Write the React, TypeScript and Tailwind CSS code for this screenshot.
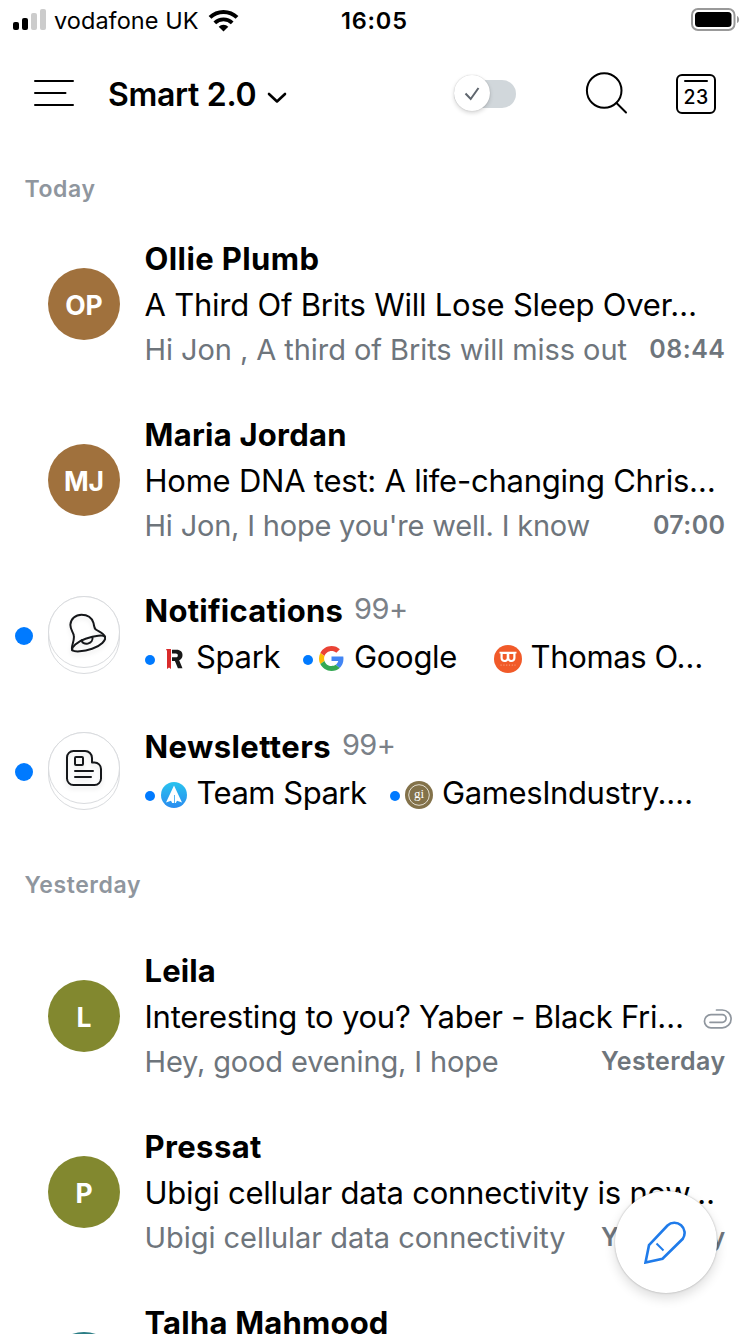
import type { ReactNode } from "react";

type Mail = {
  initials: string;
  color: string;
  name: string;
  nameClass: string;
  subject: string;
  subjectClass: string;
  preview: string;
  previewClass: string;
  time: string;
  timeClass: string;
  attachment?: boolean;
};

const today: Mail[] = [
  {
    initials: "OP",
    color: "bg-[#a0713d]",
    name: "Ollie Plumb",
    nameClass: "tracking-[0.4px]",
    subject: "A Third Of Brits Will Lose Sleep Over…",
    subjectClass: "tracking-[-0.23px]",
    preview: "Hi Jon , A third of Brits will miss out",
    previewClass: "tracking-[-0.07px]",
    time: "08:44",
    timeClass: "tracking-[0.5px]",
  },
  {
    initials: "MJ",
    color: "bg-[#a0713d]",
    name: "Maria Jordan",
    nameClass: "tracking-[0.25px]",
    subject: "Home DNA test: A life-changing Chris…",
    subjectClass: "tracking-[-0.23px]",
    preview: "Hi Jon, I hope you're well. I know",
    previewClass: "tracking-[-0.2px]",
    time: "07:00",
    timeClass: "tracking-[0.4px]",
  },
];

const yesterday: Mail[] = [
  {
    initials: "L",
    color: "bg-[#82882f]",
    name: "Leila",
    nameClass: "tracking-[0.1px]",
    subject: "Interesting to you? Yaber - Black Fri…",
    subjectClass: "tracking-[-0.24px]",
    preview: "Hey, good evening, I hope",
    previewClass: "tracking-[-0.14px]",
    time: "Yesterday",
    timeClass: "tracking-[0.4px]",
    attachment: true,
  },
  {
    initials: "P",
    color: "bg-[#82882f]",
    name: "Pressat",
    nameClass: "tracking-[0.4px]",
    subject: "Ubigi cellular data connectivity is now…",
    subjectClass: "tracking-[-0.22px]",
    preview: "Ubigi cellular data connectivity",
    previewClass: "tracking-[-0.04px]",
    time: "Yesterday",
    timeClass: "tracking-[0.4px]",
  },
  {
    initials: "TM",
    color: "bg-[#2b7d85]",
    name: "Talha Mahmood",
    nameClass: "tracking-[0.2px]",
    subject: "",
    subjectClass: "",
    preview: "",
    previewClass: "",
    time: "",
    timeClass: "",
  },
];

function StatusBar() {
  return (
    <div className="flex h-10 shrink-0 items-center">
      <svg className="ml-[13px] h-[22px] w-[33px] shrink-0" viewBox="0 0 33 22">
        <rect x="0" y="13" width="6" height="8" rx="2" fill="#000" />
        <rect x="9" y="9" width="6" height="12" rx="2" fill="#000" />
        <rect x="18" y="4" width="6" height="17" rx="2" fill="#ccc" />
        <rect x="27" y="0" width="6" height="21" rx="2" fill="#ccc" />
      </svg>
      <span className="mt-[2px] ml-[8px] w-[146px] text-[23.5px] tracking-[0.05px] whitespace-nowrap">vodafone UK</span>
      <svg className="ml-[8px] h-[23px] w-[31px] shrink-0" viewBox="0 0 31 23" fill="none" stroke="#000">
        <path d="M2 8.4a19.3 19.3 0 0 1 27 0" strokeWidth="4" />
        <path d="M6.8 13.9a12.4 12.4 0 0 1 17.4 0" strokeWidth="3.8" />
        <path d="M15.500 22.500l-4.800-4.800a6.800 6.800 0 0 1 9.600 0z" fill="#000" stroke="none" />
      </svg>
      <span className="mt-[2px] ml-[102px] w-[70px] text-[23.5px] font-semibold tracking-[0.8px] whitespace-nowrap">16:05</span>
      <svg className="ml-auto mr-[10px] h-[24px] w-[49px] shrink-0" viewBox="0 0 49 24">
        <rect x="1" y="1" width="42.500" height="21" rx="6" fill="none" stroke="#999" strokeWidth="2" />
        <rect x="4" y="4" width="36.500" height="15" rx="3.500" fill="#000" />
        <path d="M46 8c2.800 1 2.800 6 0 7z" fill="#999" />
      </svg>
    </div>
  );
}

function Header() {
  return (
    <header className="flex h-[108px] shrink-0 items-center">
      <svg className="-mt-[2px] ml-[34px] h-[28px] w-[40px]" viewBox="0 0 40 28" stroke="#000" strokeWidth="2" strokeLinecap="round">
        <path d="M1 2h38M1 14h30.500M1 26h38" />
      </svg>
      <h1 className="mt-px ml-[34px] w-[149px] text-[32px] leading-none font-semibold tracking-[-0.3px] whitespace-nowrap">Smart 2.0</h1>
      <svg className="mt-[7px] ml-[10px] h-[12px] w-[20px]" viewBox="0 0 20 12" fill="none" stroke="#000" strokeWidth="2.600" strokeLinecap="round" strokeLinejoin="round">
        <path d="M2 2l8 7.500L18 2" />
      </svg>
      <div className="ml-[167px] flex h-[28px] w-[62px] items-center rounded-full bg-[#d1d7db]">
        <div className="-mt-[3px] flex size-9 items-center justify-center rounded-full bg-white shadow-[0_2px_4px_rgba(0,0,0,0.16),0_0_1px_rgba(0,0,0,0.25)]">
          <svg className="mt-[3px] h-[14px] w-[16px]" viewBox="0 0 16 14" fill="none" stroke="#5f666e" strokeWidth="2">
            <path d="M1.500 6.500l5.200 5.500L14.500 1" />
          </svg>
        </div>
      </div>
      <svg className="-mt-[3px] ml-[69px] h-[44px] w-[44px]" viewBox="0 0 44 44" fill="none" stroke="#000" strokeWidth="2" strokeLinecap="round">
        <circle cx="19.200" cy="19.500" r="17.300" />
        <path d="M31.500 32L41 41.500" />
      </svg>
      <div className="ml-[47px] flex h-[40px] w-[40px] flex-col items-center rounded-[6px] border-2 border-black">
        <div className="mt-[4px] h-[2px] w-[24px] shrink-0 rounded-full bg-black" />
        <span className="mt-[5px] text-[19.5px] leading-[20px] font-medium tracking-[0.3px]">23</span>
      </div>
    </header>
  );
}

function SectionTitle({ children }: { children: string }) {
  return (
    <h2 className="pl-[24.5px] text-[23px] leading-[28px] font-semibold tracking-[0.6px] text-[#8f969e]">{children}</h2>
  );
}

function Paperclip() {
  return (
    <svg className="h-[20px] w-[29px]" viewBox="0 0 29 20" fill="none" stroke="#8f969e" strokeWidth="1.700" strokeLinecap="round">
      <path d="M7 13.300h12.300a3.800 3.800 0 0 0 0-7.600H8a6.550 6.550 0 0 0 0 13.100h11.200a8.900 8.900 0 0 0 0-17.800H13.500" />
    </svg>
  );
}

function MailRow({ mail }: { mail: Mail }) {
  return (
    <li className="flex h-[176px] shrink-0">
      <div
        className={`mt-[52px] ml-[48px] flex size-[72px] shrink-0 items-center justify-center rounded-full pt-[3px] text-[26.5px] font-bold text-white ${mail.color}`}
      >
        {mail.initials}
      </div>
      <div className="ml-[24.5px] flex-1 pt-[20px] pr-[24.5px] whitespace-nowrap">
        <div className={`text-[31px] leading-[46px] font-bold ${mail.nameClass}`}>{mail.name}</div>
        <div className="flex h-[46px] items-center justify-between">
          <span className={`text-[31px] leading-[46px] ${mail.subjectClass}`}>{mail.subject}</span>
          {mail.attachment && (
            <span className="-mr-[6.5px] pt-[4px]">
              <Paperclip />
            </span>
          )}
        </div>
        <div className="flex h-[44px] items-center justify-between text-[#6e757c]">
          <span className={`text-[29px] ${mail.previewClass}`}>{mail.preview}</span>
          <span className={`text-[25px] font-semibold ${mail.timeClass}`}>{mail.time}</span>
        </div>
      </div>
    </li>
  );
}

function GroupRow({ icon, title, titleClass, children }: { icon: ReactNode; title: string; titleClass: string; children: ReactNode }) {
  return (
    <li className="flex h-[136px] shrink-0">
      <div className="mt-[59px] ml-[15px] size-[18px] rounded-full bg-[#007aff]" />
      <div className="mt-[28px] ml-[15px] h-[78px] w-[72px] rounded-[36px] border border-[#d9dbde]">
        <div className="-mt-px -ml-px flex size-[72px] items-center justify-center rounded-full border border-[#d9dbde] bg-white">
          {icon}
        </div>
      </div>
      <div className="ml-[24.5px] pt-[20px] whitespace-nowrap">
        <div className="flex h-[46px] items-center">
          <span className={`text-[31px] font-bold ${titleClass}`}>{title}</span>
          <span className="-mt-[4px] ml-[11px] text-[29px] tracking-[-0.6px] text-[#7b8188]">99+</span>
        </div>
        <div className="flex h-[46px] items-center pl-[0.5px] text-[31px]">{children}</div>
      </div>
    </li>
  );
}

const Dot = () => <span className="mt-[5px] size-[10px] shrink-0 rounded-full bg-[#007aff]" />;

const BellIcon = () => (
  <svg className="h-[44px] w-[44px] drop-shadow-[0_3px_2px_rgba(0,0,0,0.08)]" viewBox="0 0 44 44" fill="none" stroke="#15171a" strokeWidth="2" strokeLinejoin="round" strokeLinecap="round">
    <path d="M10.300 40.300c-1.900-3.800 2.500-8.500 1.500-14.800-.4-3-3.700-6-3.400-11C8.800 9 13.500 4.800 19.500 4.800c6 0 10.400 3.400 11.900 8 .9 3 .5 5.300 2.400 6.700 3.200 2.300 8 3.200 9.300 7.500" />
    <path d="M10.300 40.300c-1-3.300 4.500-8.600 13.300-11.600s18.500-4.400 19.500-1.500-4 8.600-13 11.600-17.300 3.300-19.800 1.500z" />
    <path d="M19.800 30.300c.2 2.500 2.800 4.200 6 3.300 3.300-.9 5.300-3.500 4.600-6.600" />
  </svg>
);

const NewsIcon = () => (
  <svg className="h-[38px] w-[38px] drop-shadow-[0_3px_2px_rgba(0,0,0,0.1)]" viewBox="0 0 38 38" fill="none" stroke="#15171a" strokeWidth="2" strokeLinejoin="round" strokeLinecap="round">
    <path d="M8.500 2H20a7 7 0 0 1 7 7v4.500h2.500a6.500 6.500 0 0 1 6.500 6.500v9.500a6.500 6.500 0 0 1-6.500 6.500h-21A6.500 6.500 0 0 1 2 29.500v-21A6.500 6.500 0 0 1 8.500 2z" />
    <rect x="10" y="8" width="8" height="8" rx="1" />
    <path d="M10 22h18M10 28h16" />
  </svg>
);

const ReaddleIcon = () => (
  <svg className="mt-[3px] ml-[11px] h-[20px] w-[17px]" viewBox="0 0 17 20">
    <path d="M0 0h5v20l-2-1.500L1 20V2z" fill="#d92b2b" />
    <path d="M6 .7h4.500c4 0 6 2.300 6 5.500 0 2.400-1.200 4.200-3.300 5l3.300 8h-4.600l-3-7.200H6V8.300h3.800c1.300 0 2-.7 2-1.900s-.7-1.900-2-1.900H6z" fill="#181818" />
  </svg>
);

const GoogleIcon = () => (
  <svg className="mt-[3px] ml-[6px] size-[25px]" viewBox="0 0 48 48">
    <path fill="#EA4335" d="M24 9.500c3.540 0 6.710 1.220 9.210 3.600l6.850-6.850C35.900 2.380 30.470 0 24 0 14.620 0 6.510 5.380 2.560 13.220l7.980 6.190C12.430 13.720 17.740 9.500 24 9.500z" />
    <path fill="#4285F4" d="M46.980 24.550c0-1.570-.15-3.090-.38-4.550H24v9.020h12.940c-.58 2.960-2.260 5.480-4.780 7.180l7.730 6c4.510-4.180 7.090-10.360 7.090-17.650z" />
    <path fill="#FBBC05" d="M10.530 28.590c-.48-1.450-.76-2.990-.76-4.590s.27-3.140.76-4.590l-7.980-6.190C.92 16.460 0 20.120 0 24s.92 7.540 2.560 10.780z" />
    <path fill="#34A853" d="M24 48c6.480 0 11.930-2.130 15.890-5.810l-7.730-6c-2.150 1.450-4.920 2.300-8.160 2.300-6.260 0-11.570-4.220-13.470-9.910l-7.980 6.190C6.510 42.620 14.620 48 24 48z" />
  </svg>
);

const MaskIcon = () => (
  <svg className="mt-[3px] ml-[36px] size-[28px]" viewBox="0 0 28 28">
    <circle cx="14" cy="14" r="14" fill="#f15a29" />
    <path d="M5.500 6.700h17v1.800h-1v4.500c0 4.300-5 5.300-7.500 2.500-2.500 2.800-7.500 1.800-7.500-2.500V8.500h-1z" fill="#fff" />
    <path d="M8.700 9h4v4c0 2.500-4 2.500-4 0zM15.300 9h4v4c0 2.500-4 2.500-4 0z" fill="#f15a29" />
    <path d="M6.500 20.200h15" stroke="#f9966f" strokeWidth="1.200" strokeDasharray="1.200 1.600" />
  </svg>
);

const SparkIcon = () => (
  <svg className="mt-[3px] ml-[6px] size-[26px]" viewBox="0 0 26 26">
    <defs>
      <linearGradient id="spark" x1="0" y1="0" x2="0" y2="1">
        <stop offset="0" stopColor="#29c3ee" />
        <stop offset="1" stopColor="#2a8cf0" />
      </linearGradient>
    </defs>
    <circle cx="13" cy="13" r="13" fill="url(#spark)" />
    <path d="M13 3.500l8 17-5-1.800-1.200 2.300h-3.600L10 18.700l-5 1.800z" fill="#fff" />
    <path d="M13.500 13v8" stroke="#5db8f2" strokeWidth="1" />
  </svg>
);

const GamesIcon = () => (
  <svg className="mt-[3px] ml-[5px] size-[28px]" viewBox="0 0 28 28">
    <circle cx="14" cy="14" r="14" fill="#83724a" />
    <circle cx="14" cy="14" r="10.300" fill="none" stroke="#e4dfd2" strokeWidth="1" />
    <text x="14" y="16.500" textAnchor="middle" fontFamily="Liberation Serif, serif" fontSize="13" fill="#fff">gi</text>
  </svg>
);

function ComposeButton() {
  return (
    <button className="absolute top-[1191px] left-[615px] flex size-[102px] items-center justify-center rounded-full bg-white shadow-[0_5px_12px_rgba(0,0,0,0.14),0_0_2px_rgba(0,0,0,0.3)]">
      <svg className="h-[44px] w-[44px]" viewBox="0 0 44 44" fill="none" stroke="#1f7bea" strokeWidth="2.600" strokeLinejoin="miter">
        <path d="M1.500 42.500L5 25.200L23.500 5.500a10.200 10.200 0 0 1 15.300 13.300L18.500 38.700z" />
        <path d="M12.500 23.500l7 7" strokeWidth="2" />
      </svg>
    </button>
  );
}

export default function App() {
  return (
    <div className="relative flex h-[1334px] w-[750px] flex-col overflow-hidden bg-white font-['Inter','Liberation_Sans',sans-serif] text-black">
      <StatusBar />
      <Header />
      <main className="flex flex-col">
        <div className="h-[68px] shrink-0 pt-[27px]">
          <SectionTitle>Today</SectionTitle>
        </div>
        <ul className="flex flex-col">
          {today.map((mail) => (
            <MailRow key={mail.name} mail={mail} />
          ))}
          <GroupRow icon={<BellIcon />} title="Notifications" titleClass="tracking-[0.25px]">
            <Dot />
            <ReaddleIcon />
            <span className="ml-[13px] w-[84px] tracking-[-0.3px]">Spark</span>
            <span className="ml-[23px] flex">
              <Dot />
            </span>
            <GoogleIcon />
            <span className="ml-[10px] w-[104px] tracking-[-0.3px]">Google</span>
            <MaskIcon />
            <span className="ml-[8.5px] tracking-[-0.35px]">Thomas O…</span>
          </GroupRow>
          <GroupRow icon={<NewsIcon />} title="Newsletters" titleClass="tracking-[0.4px]">
            <Dot />
            <SparkIcon />
            <span className="ml-[9.5px] w-[169.5px] tracking-[-0.5px]">Team Spark</span>
            <span className="ml-[24px] flex">
              <Dot />
            </span>
            <GamesIcon />
            <span className="ml-[9px] tracking-[-0.4px]">GamesIndustry.…</span>
          </GroupRow>
        </ul>
        <div className="h-[88px] shrink-0 pt-[31px]">
          <SectionTitle>Yesterday</SectionTitle>
        </div>
        <ul className="flex flex-col">
          {yesterday.map((mail) => (
            <MailRow key={mail.name} mail={mail} />
          ))}
        </ul>
      </main>
      <ComposeButton />
    </div>
  );
}
